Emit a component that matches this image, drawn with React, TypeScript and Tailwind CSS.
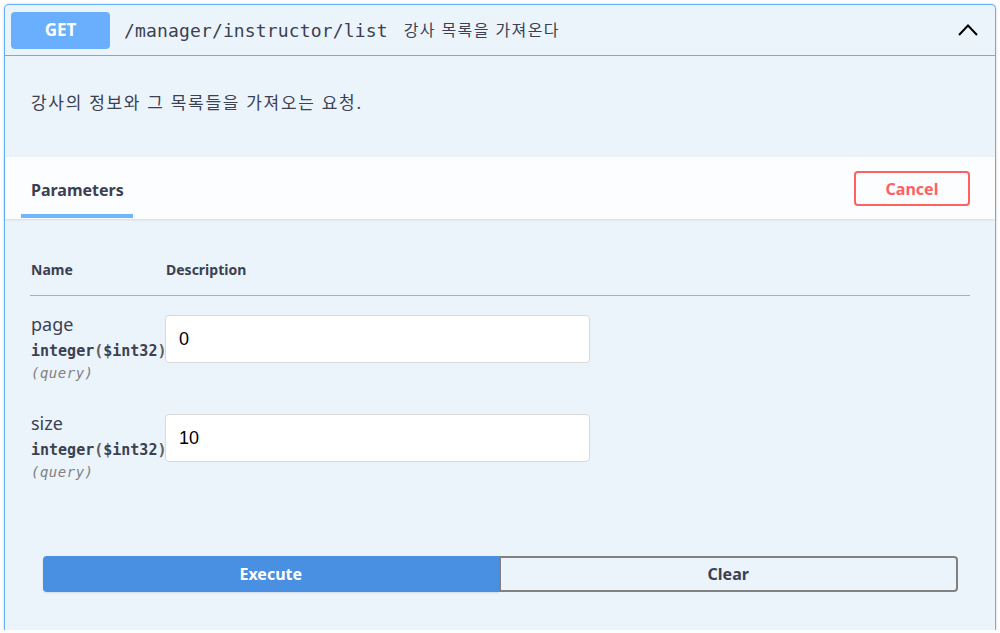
import React from 'react';

const sans = "font-['Noto_Sans','Noto_Sans_CJK_KR',sans-serif]";
const mono = "font-['DejaVu_Sans_Mono','Noto_Sans_CJK_KR',monospace]";

const params = [
  { name: 'page', type: 'integer', format: '$int32', value: '0' },
  { name: 'size', type: 'integer', format: '$int32', value: '10' },
];

const ParamRow: React.FC<{ name: string; type: string; format: string; value: string }> = ({ name, type, format, value }) => (
  <div className="flex pt-[17px] pb-[11px]">
    <div className="w-[135px] shrink-0 pl-[1px]">
      <div className={`${sans} text-[18px] leading-[22px] text-[#3b4151]`}>{name}</div>
      <div className={`${mono} mt-[5px] text-[15px] leading-[22px] font-semibold text-[#3b4151] whitespace-nowrap`}>
        {type}<span className="text-[#606060]">(</span>{format}<span className="text-[#606060]">)</span>
      </div>
      <div className={`${mono} text-[14px] leading-[22px] italic text-[#808080] tracking-[0.5px]`}>(query)</div>
    </div>
    <div className="mt-[2px]">
      <div className="w-[425px] h-[48px] bg-white border border-[#d9d9d9] rounded-[4px] flex items-center pl-[13px] font-['Liberation_Sans',sans-serif] text-[18px] text-black">
        {value}
      </div>
    </div>
  </div>
);

export default function App() {
  return (
    <div className="w-[1000px] h-[633px] bg-white overflow-hidden px-[4px] pt-[4px]">
      <div className="h-[626px] border border-b-0 border-[#61affe] rounded-t-[5px] bg-[#ebf3fb] shadow-[0_0_3px_rgba(0,0,0,0.19)] flex flex-col">
        {/* summary */}
        <div className="h-[51px] shrink-0 border-b border-[#61affe] flex items-center pl-[6px] pr-[17px]">
          <div className={`${sans} w-[99px] h-[37px] rounded-[4px] bg-[#6aaffe] text-white font-bold text-[17px] flex items-center justify-center`}>
            GET
          </div>
          <span className={`${mono} ml-[14px] text-[18px] tracking-[0.15px] text-[#3b4151]`}>/manager/instructor/list</span>
          <span className={`${sans} ml-[16px] text-[16px] tracking-[1.4px] text-[#3b4151]`}>강사 목록을 가져온다</span>
          <svg className="ml-auto" width="20" height="20" viewBox="0 0 20 20" fill="none">
            <path d="M1 15 L10 5.5 L19 15" stroke="#000" strokeWidth="2" />
          </svg>
        </div>

        {/* description */}
        <div className="h-[101px] shrink-0 pt-[35px] pl-[26px]">
          <p className={`${sans} text-[17px] leading-[24px] tracking-[1.7px] text-[#3b4151]`}>강사의 정보와 그 목록들을 가져오는 요청.</p>
        </div>

        {/* section header */}
        <div className="h-[62px] shrink-0 bg-[#fbfdfe] shadow-[0_1px_2px_rgba(0,0,0,0.1)] flex justify-between pl-[16px] pr-[25px] relative z-10">
          <div className="flex flex-col pt-[21px] w-[112px]">
            <h4 className={`${sans} pl-[10px] text-[16px] leading-[24px] font-bold text-[#3b4151]`}>Parameters</h4>
            <div className="mt-[12px] h-[4px] bg-[#61affe] opacity-90" />
          </div>
          <button className={`${sans} mt-[14px] w-[116px] h-[35px] border-2 border-[#ff6060] rounded-[4px] text-[#ff6060] font-bold text-[16px] bg-transparent`}>
            Cancel
          </button>
        </div>

        {/* parameters table */}
        <div className="px-[25px] pt-[41px]">
          <div className={`${sans} flex pb-[15px] border-b border-[#a9b0bc] text-[14px] leading-[20px] font-bold text-[#3b4151]`}>
            <div className="w-[136px] pl-[1px]">Name</div>
            <div>Description</div>
          </div>
          {params.map(p => (
            <ParamRow key={p.name} {...p} />
          ))}
        </div>

        {/* execute */}
        <div className="flex pl-[38px] pr-[37px] mt-[62px]">
          <button className={`${sans} flex-1 h-[36px] bg-[#4990e2] text-white font-bold text-[16px] rounded-l-[4px] shadow-[0_1px_2px_rgba(0,0,0,0.1)]`}>
            Execute
          </button>
          <button className={`${sans} flex-1 h-[36px] border-2 border-[#808080] text-[#3b4151] font-bold text-[16px] rounded-r-[4px] bg-transparent`}>
            Clear
          </button>
        </div>
      </div>
      <div className="h-[3px] bg-[#fbfdfe]" />
    </div>
  );
}
